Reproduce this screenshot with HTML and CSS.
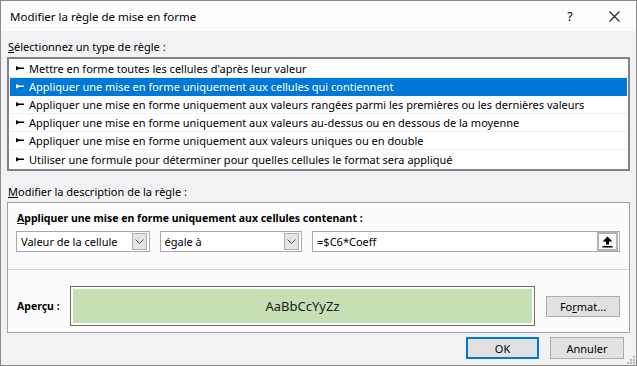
FILE: index.html
```html
<!DOCTYPE html>
<html lang="fr">

<head>
  <meta charset="UTF-8">
  <title>Modifier la règle de mise en forme</title>
  <link rel="stylesheet" href="styles.css">
</head>

<body>
  <div class="dialog">
    <div class="titlebar">
      <span class="title">Modifier la règle de mise en forme</span>
      <span class="help">?</span>
      <span class="close">
        <svg width="11" height="11" viewBox="0 0 11 11"><path d="M0.5 0.5 L10.5 10.5 M10.5 0.5 L0.5 10.5" stroke="#222" stroke-width="1.1" fill="none"/></svg>
      </span>
    </div>

    <div class="content">
      <div class="label"><u>S</u>électionnez un type de règle :</div>
      <ul class="rule-list">
        <li><svg class="bullet" width="8" height="5" viewBox="0 0 8 5"><path d="M0 0 L3 1.5 L8 1.5 L8 3 L3 3 L0 4.5 Z" fill="currentColor"/></svg>Mettre en forme toutes les cellules d'après leur valeur</li>
        <li class="selected"><svg class="bullet" width="8" height="5" viewBox="0 0 8 5"><path d="M0 0 L3 1.5 L8 1.5 L8 3 L3 3 L0 4.5 Z" fill="currentColor"/></svg>Appliquer une mise en forme uniquement aux cellules qui contiennent</li>
        <li><svg class="bullet" width="8" height="5" viewBox="0 0 8 5"><path d="M0 0 L3 1.5 L8 1.5 L8 3 L3 3 L0 4.5 Z" fill="currentColor"/></svg>Appliquer une mise en forme uniquement aux valeurs rangées parmi les premières ou les dernières valeurs</li>
        <li><svg class="bullet" width="8" height="5" viewBox="0 0 8 5"><path d="M0 0 L3 1.5 L8 1.5 L8 3 L3 3 L0 4.5 Z" fill="currentColor"/></svg>Appliquer une mise en forme uniquement aux valeurs au-dessus ou en dessous de la moyenne</li>
        <li><svg class="bullet" width="8" height="5" viewBox="0 0 8 5"><path d="M0 0 L3 1.5 L8 1.5 L8 3 L3 3 L0 4.5 Z" fill="currentColor"/></svg>Appliquer une mise en forme uniquement aux valeurs uniques ou en double</li>
        <li><svg class="bullet" width="8" height="5" viewBox="0 0 8 5"><path d="M0 0 L3 1.5 L8 1.5 L8 3 L3 3 L0 4.5 Z" fill="currentColor"/></svg>Utiliser une formule pour déterminer pour quelles cellules le format sera appliqué</li>
      </ul>

      <div class="label label-desc"><u>M</u>odifier la description de la règle :</div>
      <div class="group">
        <div class="group-top">
          <div class="group-title"><u>A</u>ppliquer une mise en forme uniquement aux cellules contenant :</div>
          <div class="controls">
            <div class="combo combo-field">
              <span>Valeur de la cellule</span>
              <span class="combo-btn"><svg width="9" height="5" viewBox="0 0 9 5"><path d="M0.5 0.5 L4.5 4.5 L8.5 0.5" stroke="#555" fill="none"/></svg></span>
            </div>
            <div class="combo combo-op">
              <span>égale à</span>
              <span class="combo-btn"><svg width="9" height="5" viewBox="0 0 9 5"><path d="M0.5 0.5 L4.5 4.5 L8.5 0.5" stroke="#555" fill="none"/></svg></span>
            </div>
            <div class="ref-input">
              <span>=$C6*Coeff</span>
              <span class="ref-btn"><svg width="11" height="12" viewBox="0 0 11 12"><path d="M5.5 0.5 L10.5 5.5 L7 5.5 L7 8.5 L4 8.5 L4 5.5 L0.5 5.5 Z" fill="#000"/><rect x="0.5" y="10" width="10" height="1.5" fill="#000"/></svg></span>
            </div>
          </div>
        </div>
        <div class="preview-row">
          <span class="preview-label">Aperçu :</span>
          <div class="preview">
            <div class="preview-fill">AaBbCcYyZz</div>
          </div>
          <button class="btn btn-format">Fo<u>r</u>mat...</button>
        </div>
      </div>

      <div class="actions">
        <button class="btn btn-ok">OK</button>
        <button class="btn btn-cancel">Annuler</button>
      </div>
    </div>

    <svg class="grip" width="8" height="8" viewBox="0 0 8 8">
      <rect x="6" y="0" width="2" height="2" fill="#b8b8b8"/>
      <rect x="3" y="3" width="2" height="2" fill="#b8b8b8"/>
      <rect x="6" y="3" width="2" height="2" fill="#b8b8b8"/>
      <rect x="0" y="6" width="2" height="2" fill="#b8b8b8"/>
      <rect x="3" y="6" width="2" height="2" fill="#b8b8b8"/>
      <rect x="6" y="6" width="2" height="2" fill="#b8b8b8"/>
    </svg>
  </div>
</body>

</html>
```

FILE: styles.css
```css
* {
  margin: 0;
  padding: 0;
  box-sizing: border-box;
}

body {
  font-family: "Noto Sans", "Open Sans", sans-serif;
  font-size: 11px;
  color: #000;
  background: #f2f1f4;
}

.dialog {
  position: relative;
  width: 637px;
  height: 366px;
  border: 1px solid #8a8a8a;
  background: #f2f1f4;
}

/* title bar */
.titlebar {
  display: flex;
  align-items: center;
  height: 30px;
  padding-left: 9px;
  background: #fcfdfc;
}

.title {
  flex: 1;
  font-size: 11.5px;
}

.help {
  width: 12px;
  margin-right: 33px;
  font-size: 12.5px;
  text-align: center;
}

.close {
  display: flex;
  margin-right: 16px;
}

/* main content */
.content {
  padding: 0 6px;
}

.label {
  height: 16px;
  line-height: 16px;
  margin-top: 8px;
  padding-left: 1px;
}

.label-desc {
  margin-top: 13px;
}

.rule-list {
  list-style: none;
  margin-top: 2px;
  padding: 1px;
  border: 2px solid #838387;
  background: #fff;
}

.rule-list li {
  display: flex;
  align-items: center;
  height: 18px;
  padding-left: 6px;
  border-bottom: 1px solid #f0f0f0;
  white-space: nowrap;
  overflow: hidden;
}

.rule-list li:last-child {
  border-bottom: none;
}

.rule-list li.selected {
  background: #0078d7;
  color: #fff;
  border-bottom-color: #0078d7;
}

.bullet {
  flex: none;
  margin-right: 5px;
}

/* description group */
.group {
  margin-top: 2px;
  border: 1px solid #a0a0a0;
  background: #fbfcfb;
}

.group-top {
  padding: 7px 9px 17px 8px;
}

.group-title {
  height: 16px;
  line-height: 16px;
  padding-left: 1px;
  font-size: 10.5px;
  font-weight: bold;
}

.controls {
  display: flex;
  gap: 10px;
  margin-top: 5px;
}

.combo,
.ref-input {
  display: flex;
  align-items: center;
  justify-content: space-between;
  height: 21px;
  padding: 0 2px 0 4px;
  border: 1px solid #a9a9a9;
  background: #fff;
}

.combo-field {
  width: 134px;
}

.combo-op {
  width: 143px;
}

.ref-input {
  width: 309px;
  padding-right: 1px;
}

.combo-btn {
  display: flex;
  align-items: center;
  justify-content: center;
  width: 15px;
  height: 17px;
  border: 1px solid #adadad;
  background: #e5e5e5;
}

.ref-btn {
  display: flex;
  align-items: center;
  justify-content: center;
  width: 21px;
  height: 19px;
  border: 2px solid #b3b3b3;
  background: #fafafa;
}

.preview-row {
  display: flex;
  align-items: center;
  padding: 16px 0 6px 9px;
  border-top: 1px solid #d6d6d6;
}

.preview-label {
  width: 53px;
  font-size: 10.5px;
  font-weight: bold;
}

.preview {
  width: 465px;
  height: 40px;
  padding: 2px;
  border: 1px solid #6e6e6e;
  background: #fff;
}

.preview-fill {
  display: flex;
  align-items: center;
  justify-content: center;
  height: 100%;
  background: #c6e0b4;
  color: #1a1a1a;
  font-size: 13px;
}

/* buttons */
.btn {
  height: 21px;
  border: 1px solid #adadad;
  background: #e1e1e1;
  font-family: inherit;
  font-size: 11px;
  color: #000;
}

.btn-format {
  width: 74px;
  margin-left: 11px;
}

.actions {
  display: flex;
  justify-content: flex-end;
  gap: 11px;
  margin-top: 4px;
  padding-right: 6px;
}

.btn-ok {
  width: 73px;
  height: 22px;
  border: 2px solid #0078d7;
}

.btn-cancel {
  width: 74px;
  height: 22px;
}

.grip {
  position: absolute;
  right: 1px;
  bottom: 1px;
}
```
